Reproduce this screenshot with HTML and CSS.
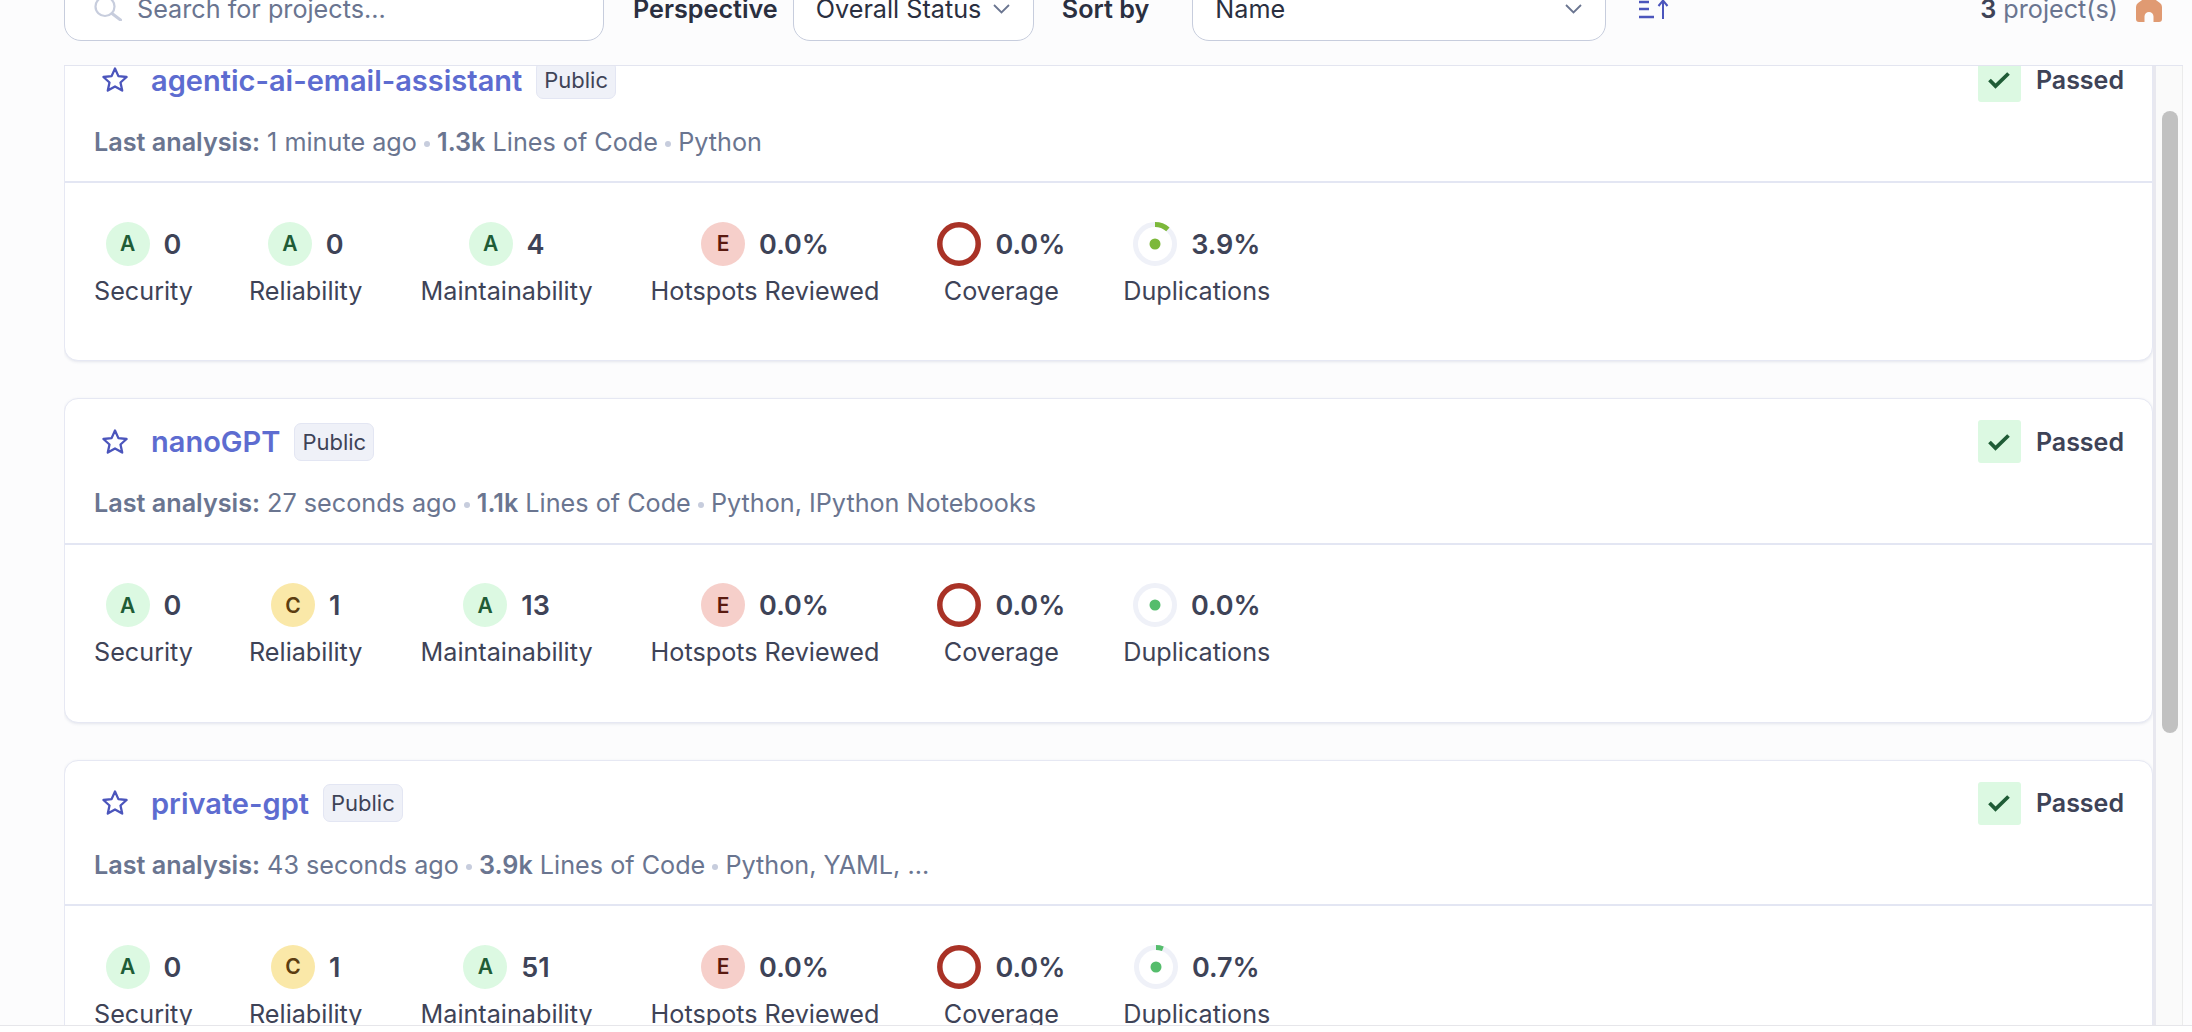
FILE: index.html
```html
<!DOCTYPE html>
<html lang="en">
<head>
    <meta charset="UTF-8">
    <title>Projects</title>
    <link rel="stylesheet" href="styles.css">
</head>
<body>
    <div class="page">
        <!-- Filter bar -->
        <div class="toolbar">
            <div class="search">
                <svg class="search-icon" width="28" height="24" viewBox="0 0 28 24"><circle cx="11" cy="9.5" r="9.5" fill="none" stroke="#c7cddd" stroke-width="2.2"/><path d="M18 16.5l8.5 6.5" fill="none" stroke="#c7cddd" stroke-width="3" stroke-linecap="round"/></svg>
                <span>Search for projects...</span>
            </div>
            <span class="tool-label label-perspective">Perspective</span>
            <div class="select select-status">
                <span>Overall Status</span>
                <svg width="17" height="10" viewBox="0 0 17 10"><path d="M1 1l7.5 7.5L16 1" fill="none" stroke="#6a7590" stroke-width="1.8"/></svg>
            </div>
            <span class="tool-label label-sort">Sort by</span>
            <div class="select select-sort">
                <span>Name</span>
                <svg width="17" height="10" viewBox="0 0 17 10"><path d="M1 1l7.5 7.5L16 1" fill="none" stroke="#6a7590" stroke-width="1.8"/></svg>
            </div>
            <svg class="sort-icon" width="31" height="20" viewBox="0 0 31 20"><path d="M0 3h10M0 10h10M0 18h15" fill="none" stroke="#4b55bc" stroke-width="2.4"/><path d="M24 20V2M19.5 7L24 1.5 28.5 7" fill="none" stroke="#4b55bc" stroke-width="2"/></svg>
            <div class="count"><b>3</b> project(s)</div>
            <svg class="home-icon" width="26" height="30" viewBox="0 0 26 30"><path d="M13 3L24 11Q26 12.500 26 15V27a3 3 0 0 1-3 3h-5.500V24.500a4.500 4.500 0 0 0-9 0V30H3a3 3 0 0 1-3-3V15Q0 12.500 2 11z" fill="#e09a72"/></svg>
        </div>

        <div class="content">
            <div class="list">
                <!-- Project 1 -->
                <div class="card card-first">
                    <div class="card-head">
                        <div class="title-row">
                            <svg class="star" width="28" height="28" viewBox="0 0 28 28"><path d="M14 2.5l3.4 7.6 8.2.9-6.1 5.5 1.7 8.1-7.2-4.1-7.2 4.1 1.7-8.1L2.400 11l8.200-.9z" fill="none" stroke="#4b55bc" stroke-width="2.3" stroke-linejoin="round"/></svg>
                            <a class="name">agentic-ai-email-assistant</a>
                            <span class="tag">Public</span>
                            <div class="gate">
                                <span class="gate-box"><svg width="22" height="18" viewBox="0 0 22 18"><path d="M1.500 9l6 6L20.500 2.500" fill="none" stroke="#1f5c36" stroke-width="3.800"/></svg></span>
                                <span class="gate-text">Passed</span>
                            </div>
                        </div>
                        <div class="meta"><b>Last analysis:</b> 1 minute ago <i></i> <b>1.3k</b> Lines of Code <i></i> Python</div>
                    </div>
                    <div class="metrics">
                        <div class="metric"><div class="metric-top"><span class="rate rate-a">A</span><span class="num">0</span></div><div class="metric-label">Security</div></div>
                        <div class="metric"><div class="metric-top"><span class="rate rate-a">A</span><span class="num">0</span></div><div class="metric-label">Reliability</div></div>
                        <div class="metric"><div class="metric-top"><span class="rate rate-a">A</span><span class="num">4</span></div><div class="metric-label">Maintainability</div></div>
                        <div class="metric"><div class="metric-top"><span class="rate rate-e">E</span><span class="num">0.0%</span></div><div class="metric-label">Hotspots Reviewed</div></div>
                        <div class="metric"><div class="metric-top"><svg class="ring" width="44" height="44" viewBox="0 0 44 44"><circle cx="22" cy="22" r="19.200" fill="none" stroke="#a93226" stroke-width="5.500"/></svg><span class="num">0.0%</span></div><div class="metric-label">Coverage</div></div>
                        <div class="metric"><div class="metric-top"><svg class="ring" width="44" height="44" viewBox="0 0 44 44"><circle cx="22" cy="22" r="19.500" fill="none" stroke="#eff1f8" stroke-width="5"/><circle cx="22" cy="22" r="19.500" fill="none" stroke="#7cb83a" stroke-width="5" stroke-dasharray="14 200" transform="rotate(-90 22 22)"/><circle cx="22" cy="22" r="5.500" fill="#7cb83a"/></svg><span class="num">3.9%</span></div><div class="metric-label">Duplications</div></div>
                    </div>
                </div>

                <!-- Project 2 -->
                <div class="card">
                    <div class="card-head">
                        <div class="title-row">
                            <svg class="star" width="28" height="28" viewBox="0 0 28 28"><path d="M14 2.5l3.4 7.6 8.2.9-6.1 5.5 1.7 8.1-7.2-4.1-7.2 4.1 1.7-8.1L2.400 11l8.200-.9z" fill="none" stroke="#4b55bc" stroke-width="2.3" stroke-linejoin="round"/></svg>
                            <a class="name">nanoGPT</a>
                            <span class="tag">Public</span>
                            <div class="gate">
                                <span class="gate-box"><svg width="22" height="18" viewBox="0 0 22 18"><path d="M1.500 9l6 6L20.500 2.500" fill="none" stroke="#1f5c36" stroke-width="3.800"/></svg></span>
                                <span class="gate-text">Passed</span>
                            </div>
                        </div>
                        <div class="meta"><b>Last analysis:</b> 27 seconds ago <i></i> <b>1.1k</b> Lines of Code <i></i> Python, IPython Notebooks</div>
                    </div>
                    <div class="metrics">
                        <div class="metric"><div class="metric-top"><span class="rate rate-a">A</span><span class="num">0</span></div><div class="metric-label">Security</div></div>
                        <div class="metric"><div class="metric-top"><span class="rate rate-c">C</span><span class="num">1</span></div><div class="metric-label">Reliability</div></div>
                        <div class="metric"><div class="metric-top"><span class="rate rate-a">A</span><span class="num">13</span></div><div class="metric-label">Maintainability</div></div>
                        <div class="metric"><div class="metric-top"><span class="rate rate-e">E</span><span class="num">0.0%</span></div><div class="metric-label">Hotspots Reviewed</div></div>
                        <div class="metric"><div class="metric-top"><svg class="ring" width="44" height="44" viewBox="0 0 44 44"><circle cx="22" cy="22" r="19.200" fill="none" stroke="#a93226" stroke-width="5.500"/></svg><span class="num">0.0%</span></div><div class="metric-label">Coverage</div></div>
                        <div class="metric"><div class="metric-top"><svg class="ring" width="44" height="44" viewBox="0 0 44 44"><circle cx="22" cy="22" r="19.500" fill="none" stroke="#eff1f8" stroke-width="5"/><circle cx="22" cy="22" r="5.500" fill="#55bd6c"/></svg><span class="num">0.0%</span></div><div class="metric-label">Duplications</div></div>
                    </div>
                </div>

                <!-- Project 3 -->
                <div class="card">
                    <div class="card-head">
                        <div class="title-row">
                            <svg class="star" width="28" height="28" viewBox="0 0 28 28"><path d="M14 2.5l3.4 7.6 8.2.9-6.1 5.5 1.7 8.1-7.2-4.1-7.2 4.1 1.7-8.1L2.400 11l8.200-.9z" fill="none" stroke="#4b55bc" stroke-width="2.3" stroke-linejoin="round"/></svg>
                            <a class="name">private-gpt</a>
                            <span class="tag">Public</span>
                            <div class="gate">
                                <span class="gate-box"><svg width="22" height="18" viewBox="0 0 22 18"><path d="M1.500 9l6 6L20.500 2.500" fill="none" stroke="#1f5c36" stroke-width="3.800"/></svg></span>
                                <span class="gate-text">Passed</span>
                            </div>
                        </div>
                        <div class="meta"><b>Last analysis:</b> 43 seconds ago <i></i> <b>3.9k</b> Lines of Code <i></i> Python, YAML, ...</div>
                    </div>
                    <div class="metrics">
                        <div class="metric"><div class="metric-top"><span class="rate rate-a">A</span><span class="num">0</span></div><div class="metric-label">Security</div></div>
                        <div class="metric"><div class="metric-top"><span class="rate rate-c">C</span><span class="num">1</span></div><div class="metric-label">Reliability</div></div>
                        <div class="metric"><div class="metric-top"><span class="rate rate-a">A</span><span class="num">51</span></div><div class="metric-label">Maintainability</div></div>
                        <div class="metric"><div class="metric-top"><span class="rate rate-e">E</span><span class="num">0.0%</span></div><div class="metric-label">Hotspots Reviewed</div></div>
                        <div class="metric"><div class="metric-top"><svg class="ring" width="44" height="44" viewBox="0 0 44 44"><circle cx="22" cy="22" r="19.200" fill="none" stroke="#a93226" stroke-width="5.500"/></svg><span class="num">0.0%</span></div><div class="metric-label">Coverage</div></div>
                        <div class="metric"><div class="metric-top"><svg class="ring" width="44" height="44" viewBox="0 0 44 44"><circle cx="22" cy="22" r="19.500" fill="none" stroke="#eff1f8" stroke-width="5"/><circle cx="22" cy="22" r="19.500" fill="none" stroke="#55bd6c" stroke-width="5" stroke-dasharray="7 200" transform="rotate(-90 22 22)"/><circle cx="22" cy="22" r="5.500" fill="#55bd6c"/></svg><span class="num">0.7%</span></div><div class="metric-label">Duplications</div></div>
                    </div>
                </div>
            </div>
            <div class="track"><div class="thumb"></div></div>
        </div>
    </div>
</body>
</html>
```

FILE: styles.css
```css
body {
    font-family: Inter, "Liberation Sans", sans-serif;
    background-color: #fff;
    color: #3e4357;
    margin: 0;
    padding: 0;
    overflow: hidden;
}
.page {
    height: 1025px;
    display: flex;
    flex-direction: column;
    background-color: #fcfcfd;
    border-bottom: 1px solid #e6e6ea;
    overflow: hidden;
}

/* Filter bar, scrolled partly out of view */
.toolbar {
    height: 65px;
    flex: none;
    display: flex;
    align-items: flex-end;
    box-sizing: border-box;
    padding: 0 30px 24px 64px;
    font-size: 25.2px;
}
.toolbar > * {
    flex: none;
}
.search, .select {
    height: 64px;
    box-sizing: border-box;
    display: flex;
    align-items: center;
    background-color: #fff;
    border: 1px solid #c7cddd;
    border-radius: 17px;
}
.search {
    width: 540px;
    padding: 0 0 0 29px;
    color: #6a7590;
}
.search-icon {
    margin: 0 15px 0 0;
}
.tool-label {
    height: 64px;
    display: flex;
    align-items: center;
    font-weight: 600;
    color: #2a2f40;
}
.label-perspective {
    margin-left: 29px;
}
.select {
    justify-content: space-between;
    padding: 0 23px 0 22px;
    color: #2a2f40;
}
.select-status {
    width: 241px;
    margin-left: 15px;
}
.label-sort {
    margin-left: 28px;
}
.select-sort {
    width: 414px;
    margin-left: 43px;
}
.sort-icon {
    margin: 0 0 22px 33px;
}
.count {
    height: 64px;
    display: flex;
    align-items: center;
    gap: 7px;
    margin-left: auto;
    color: #6a7590;
}
.count b {
    font-weight: 600;
    color: #3e4357;
}
.home-icon {
    margin: 0 0 19px 18px;
}

/* Project list */
.content {
    flex: 1;
    min-height: 0;
    display: flex;
    margin-left: 64px;
    margin-right: 9px;
    border-top: 1px solid #e3e5f0;
}
.list {
    flex: 1;
    min-width: 0;
    overflow: hidden;
}
.card {
    height: 324.5px;
    box-sizing: border-box;
    margin-bottom: 37px;
    background-color: #fff;
    border: 1px solid #e6e8f3;
    border-radius: 14px;
    box-shadow: 0 1px 3px rgba(60, 70, 120, 0.12);
}
.card-first {
    margin-top: -29.3px;
}
.card-head {
    height: 145.5px;
    box-sizing: border-box;
    padding: 21px 28px 0 29px;
    border-bottom: 2px solid #e3e6f3;
}
.title-row {
    height: 43px;
    display: flex;
    align-items: center;
}
.star {
    margin: 0 22px 0 7px;
}
.name {
    font-size: 29px;
    font-weight: 600;
    color: #5d6cd0;
}
.tag {
    margin-left: 14px;
    height: 38px;
    box-sizing: border-box;
    display: flex;
    align-items: center;
    padding: 0 7px;
    font-size: 22px;
    color: #3e4357;
    background-color: #eff1f8;
    border: 1px solid #e3e6f3;
    border-radius: 7px;
}
.gate {
    margin-left: auto;
    display: flex;
    align-items: center;
}
.gate-box {
    width: 43px;
    height: 43px;
    display: flex;
    align-items: center;
    justify-content: center;
    background-color: #dcf9e2;
    border-radius: 3px;
}
.gate-text {
    margin-left: 15px;
    font-size: 25px;
    font-weight: 600;
}
.meta {
    margin-top: 25px;
    line-height: 30px;
    font-size: 25.2px;
    color: #6a7590;
}
.meta b {
    font-weight: 600;
}
/* dot between the meta items */
.meta i {
    display: inline-block;
    width: 6px;
    height: 6px;
    vertical-align: middle;
    background-color: #c7cddd;
    border-radius: 50%;
}
.metrics {
    display: flex;
    gap: 58px;
    padding: 38.5px 0 0 29px;
}
.metric {
    display: flex;
    flex-direction: column;
    align-items: center;
}
.metric:first-child {
    margin-right: -2px;
}
.metric-top {
    height: 44px;
    display: flex;
    align-items: center;
    gap: 14px;
}
.rate {
    width: 44px;
    height: 44px;
    display: flex;
    align-items: center;
    justify-content: center;
    border-radius: 50%;
    font-size: 21px;
    font-weight: 600;
}
.rate-a {
    background-color: #dcf9e2;
    color: #1f5c36;
}
.rate-c {
    background-color: #fae8a8;
    color: #5c3d10;
}
.rate-e {
    background-color: #f6cfca;
    color: #5a1a10;
}
.num {
    padding-top: 1px;
    font-size: 27px;
    font-weight: 600;
}
.metric-label {
    margin-top: 10px;
    line-height: 30px;
    font-size: 25.2px;
}

/* Scrollbar */
.track {
    width: 26px;
    flex: none;
    background-color: #fafafa;
    border-left: 3px solid #e8e8ef;
    border-right: 1px solid #ebebeb;
}
.thumb {
    width: 16px;
    height: 622px;
    margin: 45px 0 0 6px;
    background-color: #c1c1c1;
    border-radius: 8px;
}
```
